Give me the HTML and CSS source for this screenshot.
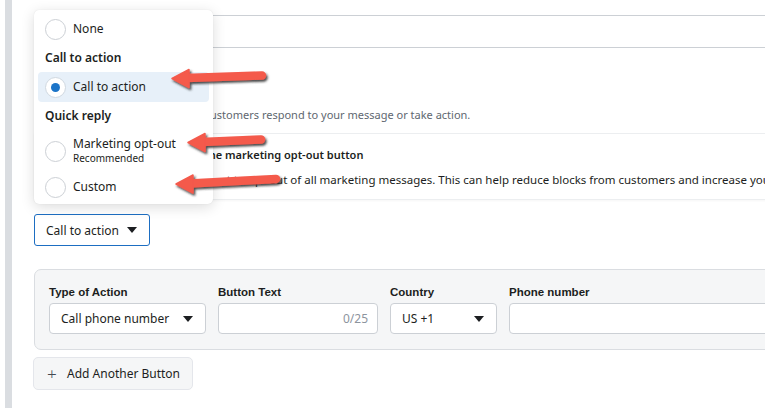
FILE: index.html
```html
<!DOCTYPE html>
<html lang="en">
<head>
    <meta charset="UTF-8">
    <meta name="viewport" content="width=device-width, initial-scale=1.0">
    <title>Message Template Buttons</title>
    <link rel="stylesheet" href="styles.css">
</head>
<body>
    <div class="rail"></div>
    <div class="main">
        <p class="intro">Your message body can include a greeting, a product update, a reminder or a typical reply to a question.</p>
        <div class="rule first"></div>
        <div class="rule second"></div>

        <h3 class="section-title">Buttons</h3>
        <p class="desc">Create up to 10 buttons that let customers respond to your message or take action.</p>

        <div class="notice">
            <div class="notice-title">We recommend that you add the marketing opt-out button</div>
            <div class="notice-body">Allow your customers to request to opt out of all marketing messages. This can help reduce blocks from customers and increase your quality rating.</div>
        </div>

        <button type="button" class="picker">
            Call to action
            <svg class="caret" width="10" height="6" viewBox="0 0 10 6"><path d="M0 0h10L5 6z"/></svg>
        </button>

        <div class="action-panel">
            <div class="field">
                <label>Type of Action</label>
                <div class="select">
                    <span>Call phone number</span>
                    <svg class="caret" width="10" height="6" viewBox="0 0 10 6"><path d="M0 0h10L5 6z"/></svg>
                </div>
            </div>
            <div class="field">
                <label>Button Text</label>
                <div class="input counter"><span>0/25</span></div>
            </div>
            <div class="field">
                <label>Country</label>
                <div class="select">
                    <span>US +1</span>
                    <svg class="caret" width="10" height="6" viewBox="0 0 10 6"><path d="M0 0h10L5 6z"/></svg>
                </div>
            </div>
            <div class="field">
                <label>Phone number</label>
                <div class="input"></div>
            </div>
        </div>

        <button type="button" class="add-btn"><span class="plus">+</span>Add Another Button</button>
    </div>

    <!-- button type menu, opened from the picker -->
    <div class="menu">
        <div class="option">
            <span class="radio"></span>
            <span class="option-label">None</span>
        </div>
        <div class="group-title">Call to action</div>
        <div class="option selected">
            <span class="radio checked"></span>
            <span class="option-label">Call to action</span>
        </div>
        <div class="group-title">Quick reply</div>
        <div class="option tall">
            <span class="radio"></span>
            <span class="option-label">Marketing opt-out<small>Recommended</small></span>
        </div>
        <div class="option">
            <span class="radio"></span>
            <span class="option-label">Custom</span>
        </div>
    </div>

    <!-- callout arrows -->
    <svg class="arrows" width="765" height="408" viewBox="0 0 765 408">
        <defs>
            <filter id="shade" x="-10%" y="-40%" width="130%" height="200%">
                <feDropShadow dx="1.5" dy="2" stdDeviation="1.2" flood-color="#2b2b2b" flood-opacity="0.85"/>
            </filter>
        </defs>
        <g fill="#f45a4c" stroke="#f45a4c" filter="url(#shade)">
            <line x1="186" y1="78" x2="262" y2="75.5" stroke-width="8.5" stroke-linecap="round"/>
            <path d="M172 78.5 L189 69.5 L189 87.5 Z" stroke-width="1.5" stroke-linejoin="round"/>

            <line x1="202" y1="142" x2="261" y2="139.5" stroke-width="8.5" stroke-linecap="round"/>
            <path d="M188 142.5 L205 133.5 L205 151.5 Z" stroke-width="1.5" stroke-linejoin="round"/>

            <line x1="190" y1="183.5" x2="276" y2="179" stroke-width="8.5" stroke-linecap="round"/>
            <path d="M176 184 L193 175 L193 193 Z" stroke-width="1.5" stroke-linejoin="round"/>
        </g>
    </svg>
</body>
</html>
```

FILE: styles.css
```css
html, body {
    margin: 0;
    height: 100%;
    overflow: hidden;
}
body {
    display: flex;
    font-family: "Noto Sans", "Open Sans", sans-serif;
    font-size: 12px;
    color: #1c1e21;
    background: #fff;
}
.rail {
    flex: 0 0 7px;
    margin-left: 5px;
    background: #dadde1;
}
.main {
    flex: 0 0 1000px;
    padding-left: 22px;
}
.intro {
    margin: -16px 0 0 180px;
    font-size: 11px;
    line-height: 18px;
    white-space: nowrap;
}
.rule {
    border-top: 1px solid #ccd0d5;
}
.rule.first {
    margin-top: 13px;
}
.rule.second {
    margin-top: 31px;
}
.section-title {
    margin: 22px 0 0;
    font-size: 14px;
    line-height: 20px;
    font-weight: 600;
}
.desc {
    margin: 16px 0 0;
    padding-left: 6px;
    font-size: 11px;
    line-height: 18px;
    color: #606770;
    white-space: nowrap;
}
.notice {
    margin-top: 9px;
    padding: 12px 12px 10px;
    border-top: 1px solid #eceef0;
    border-bottom: 1px solid #eceef0;
    box-shadow: 0 1px 2px rgba(0, 0, 0, 0.04);
    white-space: nowrap;
}
.notice-title {
    font-size: 11px;
    font-weight: 600;
    line-height: 18px;
}
.notice-body {
    margin-top: 7px;
    padding-left: 10px;
    font-size: 11.5px;
    line-height: 18px;
}
.caret {
    fill: #1c1e21;
}
.picker {
    display: flex;
    align-items: center;
    margin-top: 14px;
    width: 116px;
    height: 32px;
    padding: 0 12px 0 11px;
    justify-content: space-between;
    font: inherit;
    color: #1c1e21;
    background: #fff;
    border: 1px solid #1d6ec2;
    border-radius: 3px;
}
.action-panel {
    display: grid;
    grid-template-columns: 157px 160px 107px 1fr;
    gap: 12px;
    margin-top: 23px;
    padding: 15px 14px 15px 14px;
    background: #f5f6f7;
    border: 1px solid #dadde1;
    border-radius: 7px;
}
.field label {
    display: block;
    margin-bottom: 4px;
    font-family: "Liberation Sans", Arial, sans-serif;
    font-size: 11.5px;
    font-weight: bold;
    line-height: 14px;
}
.select,
.input {
    display: flex;
    align-items: center;
    box-sizing: border-box;
    height: 31px;
    background: #fff;
    border: 1px solid #ccd0d5;
    border-radius: 4px;
}
.select {
    justify-content: space-between;
    padding: 0 12px 0 11px;
}
.input.counter {
    justify-content: flex-end;
    padding-right: 9px;
    color: #8d949e;
}
.add-btn {
    display: flex;
    align-items: center;
    margin: 7px 0 0 -1px;
    width: 160px;
    height: 33px;
    padding: 0 0 0 13px;
    font: inherit;
    color: #1c1e21;
    background: #f5f6f7;
    border: 1px solid #e4e6eb;
    border-radius: 5px;
}
.plus {
    width: 20px;
    font-size: 17px;
    line-height: 1;
    font-weight: 300;
    color: #444950;
    text-align: left;
}

/* floating menu */
.menu {
    position: absolute;
    left: 34px;
    top: 10px;
    width: 179px;
    height: 194px;
    box-sizing: border-box;
    padding: 4px 4px 3px;
    background: #fff;
    border-radius: 5px;
    box-shadow: 0 3px 14px rgba(0, 0, 0, 0.14), 0 0 1px rgba(0, 0, 0, 0.12);
}
.option {
    display: flex;
    align-items: center;
    height: 30px;
    padding-left: 7px;
    border-radius: 4px;
}
.option.selected {
    background: #e7f0f9;
}
.option.tall {
    height: 42px;
}
.radio {
    flex: 0 0 auto;
    box-sizing: border-box;
    width: 21px;
    height: 21px;
    margin-right: 7px;
    border: 1px solid #ccd0d5;
    border-radius: 50%;
    background: #fff;
}
.radio.checked {
    position: relative;
    border-color: #d0d8e0;
}
.radio.checked::after {
    content: "";
    position: absolute;
    left: 5px;
    top: 5px;
    width: 9px;
    height: 9px;
    border-radius: 50%;
    background: #1b74c8;
}
.option-label {
    line-height: 16px;
}
.option-label small {
    display: block;
    font-size: 10px;
    line-height: 13px;
    color: #1c1e21;
}
.group-title {
    height: 28px;
    line-height: 28px;
    padding-left: 7px;
    font-weight: 600;
}
.tall .option-label {
    margin-top: -2px;
}

.arrows {
    position: absolute;
    left: 0;
    top: 0;
    pointer-events: none;
}
```
